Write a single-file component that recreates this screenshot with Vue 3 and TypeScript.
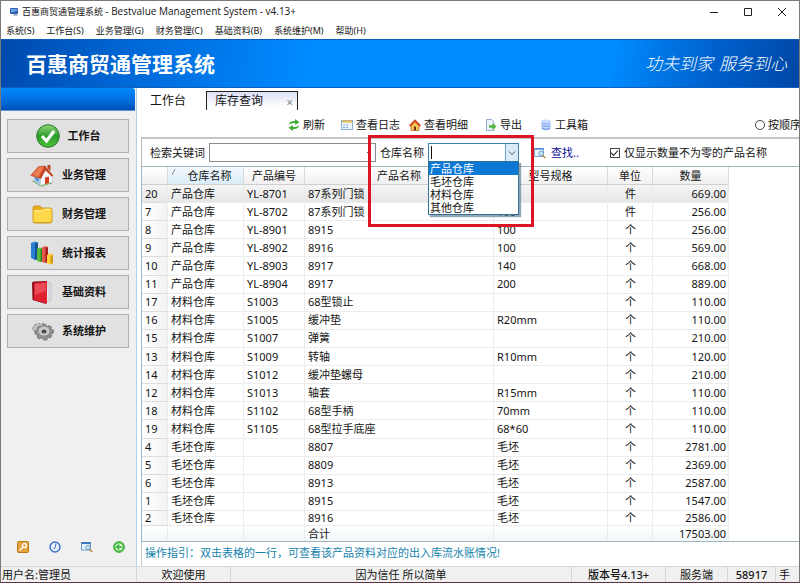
<script setup lang="ts">
import { ref } from 'vue'

interface StockRow {
  no: number
  store: string
  code: string
  name: string
  spec: string
  unit: string
  qty: string
}

const menus: string[] = ['系统(S)', '工作台(S)', '业务管理(G)', '财务管理(C)', '基础资料(B)', '系统维护(M)', '帮助(H)']

const navItems = [
  { id: 'check', label: '工作台' },
  { id: 'house', label: '业务管理' },
  { id: 'folder', label: '财务管理' },
  { id: 'chart', label: '统计报表' },
  { id: 'book', label: '基础资料' },
  { id: 'gear', label: '系统维护' },
]

const stores: string[] = ['产品仓库', '毛坯仓库', '材料仓库', '其他仓库']
const activeStore = ref(0)
const keyword = ref('')
const store = ref('')
const nonZeroOnly = ref(true)

const row = (no: number, store: string, code: string, name: string, spec: string, unit: string, qty: string): StockRow =>
  ({ no, store, code, name, spec, unit, qty })

const rows: StockRow[] = [
  row(20, '产品仓库', 'YL-8701', '87系列门锁', '', '件', '669.00'),
  row(7, '产品仓库', 'YL-8702', '87系列门锁', '100', '件', '256.00'),
  row(8, '产品仓库', 'YL-8901', '8915', '100', '个', '256.00'),
  row(9, '产品仓库', 'YL-8902', '8916', '100', '个', '569.00'),
  row(10, '产品仓库', 'YL-8903', '8917', '140', '个', '668.00'),
  row(11, '产品仓库', 'YL-8904', '8917', '200', '个', '889.00'),
  row(17, '材料仓库', 'S1003', '68型锁止', '', '个', '110.00'),
  row(16, '材料仓库', 'S1005', '缓冲垫', 'R20mm', '个', '110.00'),
  row(15, '材料仓库', 'S1007', '弹簧', '', '个', '210.00'),
  row(13, '材料仓库', 'S1009', '转轴', 'R10mm', '个', '120.00'),
  row(14, '材料仓库', 'S1012', '缓冲垫螺母', '', '个', '210.00'),
  row(12, '材料仓库', 'S1013', '轴套', 'R15mm', '个', '110.00'),
  row(18, '材料仓库', 'S1102', '68型手柄', '70mm', '个', '110.00'),
  row(19, '材料仓库', 'S1105', '68型拉手底座', '68*60', '个', '110.00'),
  row(4, '毛坯仓库', '', '8807', '毛坯', '个', '2781.00'),
  row(5, '毛坯仓库', '', '8809', '毛坯', '个', '2369.00'),
  row(6, '毛坯仓库', '', '8913', '毛坯', '个', '2587.00'),
  row(1, '毛坯仓库', '', '8915', '毛坯', '个', '1547.00'),
  row(2, '毛坯仓库', '', '8916', '毛坯', '个', '2586.00'),
]
</script>

<template>
  <div class="window">
    <header class="titlebar">
      <svg class="app-icon" viewBox="0 0 10 10" width="10" height="10">
        <rect x="1" y="1" width="8" height="6" rx="1" fill="#2f62b5" />
        <path d="M2 2h6v2L2 5.500z" fill="#6fa2e6" />
        <path d="M4 7h4l1 2H5z" fill="#a9b7c9" />
      </svg>
      <h1>百惠商贸通管理系统 <span>- Bestvalue Management System - v4.13+</span></h1>
      <div class="win-buttons">
        <button type="button" aria-label="最小化"><svg viewBox="0 0 10 10" width="10" height="10"><path d="M1 5.500h8" /></svg></button>
        <button type="button" aria-label="最大化"><svg viewBox="0 0 10 10" width="10" height="10"><path d="M1.500 1.500h7v7h-7z" /></svg></button>
        <button type="button" aria-label="关闭"><svg viewBox="0 0 10 10" width="10" height="10"><path d="M1 1l8 8M9 1L1 9" /></svg></button>
      </div>
    </header>

    <nav class="menubar">
      <button v-for="m in menus" :key="m" type="button">{{ m }}</button>
    </nav>

    <div class="banner">
      <strong>百惠商贸通管理系统</strong>
      <p class="slogan"><span>功夫到家</span><span>服务到心</span></p>
    </div>

    <div class="body">
      <aside class="sidebar">
        <div class="side-head"></div>
        <nav class="side-nav">
          <button v-for="item in navItems" :key="item.id" type="button">
            <svg v-if="item.id === 'check'" viewBox="0 0 24 24" width="24" height="24">
              <defs>
                <linearGradient id="gCheck" x1="0" y1="0" x2="0" y2="1">
                  <stop offset="0" stop-color="#8fd67d" /><stop offset=".5" stop-color="#2f9d2b" /><stop offset="1" stop-color="#4fc43c" />
                </linearGradient>
              </defs>
              <circle cx="12" cy="12" r="11.300" fill="url(#gCheck)" stroke="#26772a" />
              <path d="M6 12l4.500 5L18 7" fill="none" stroke="#fff" stroke-width="3.200" />
            </svg>
            <svg v-else-if="item.id === 'house'" viewBox="0 0 24 24" width="24" height="24">
              <path d="M2 18l9 5.500 12-3.500-5-3z" fill="#5da63a" />
              <path d="M4 11l6.500 3v8.500L4 18.500z" fill="#a9c9ea" />
              <path d="M5.500 14l3 1.300v3.200l-3-1.500z" fill="#4a8ad0" />
              <path d="M10.500 14L16 7l6 5.500v6.800l-11.500 3.200z" fill="#f6f9fc" stroke="#b4c4d4" stroke-width=".5" />
              <path d="M15 14.500l4-.900v6.500l-4 1.100z" fill="#d2401e" />
              <path d="M17.500 2h3v6l-3-2.500z" fill="#b9442a" />
              <path d="M.8 12.500L8.500 3.500 15.500 3 10.500 15.500z" fill="#e2633a" stroke="#a83a1b" stroke-width=".5" />
              <path d="M15.200 3l8 9.500-1.200 1.300-6.500-6.300-4.500 8-2-1z" fill="#c4431f" />
              <path d="M3 11.500l6-7 4-.3-5 9.300z" fill="#f08a5e" opacity=".7" />
            </svg>
            <svg v-else-if="item.id === 'folder'" viewBox="0 0 24 24" width="24" height="24">
              <path d="M3 6q0-2 2-2h5l2 2h8q2 0 2 2v11q0 2-2 2H5q-2 0-2-2z" fill="#e9ae1c" stroke="#c48a10" stroke-width=".8" />
              <path d="M3.500 9q0-1 1-1H12l2-1.500h6.500q1 0 1 1v11.500q0 1-1 1h-16q-1 0-1-1z" fill="#ffd84a" />
              <path d="M4.500 9H12.500l2-1.500h6" fill="none" stroke="#fff0a5" stroke-width=".9" />
            </svg>
            <svg v-else-if="item.id === 'chart'" viewBox="0 0 24 24" width="24" height="24">
              <path d="M1 2l4-1.500 3 1V18l-3 1-4-2z" fill="#2b7fd0" /><path d="M5 3l3-1.500V18l-3 1z" fill="#155292" />
              <path d="M7 8l3-1.500 3 1V20l-3 1-3-1z" fill="#5bbd3e" /><path d="M10.500 8.500L13 7.500V20l-2.500 1z" fill="#2f8722" />
              <path d="M12 6.500L15 5l3 1v15l-3 1-3-1z" fill="#e4574c" /><path d="M15.500 7L18 6v15l-2.500 1z" fill="#a71d1d" />
              <path d="M17 14l3-1.500 3 1V22l-3 1.500-3-1z" fill="#ffd23c" /><path d="M20.500 15l2.500-1.500V22l-2.500 1.500z" fill="#d39a10" />
            </svg>
            <svg v-else-if="item.id === 'book'" viewBox="0 0 24 24" width="24" height="24">
              <path d="M17 2l4 1.500V20l-5 2z" fill="#e8e8ee" stroke="#a7a7b4" stroke-width=".6" />
              <path d="M19 3.500V20" stroke="#b5b5c0" stroke-width=".7" />
              <path d="M2 3q0-1.500 2-1.500L17 1v.8L16 3.500V24L2.500 20z" fill="#8d1018" />
              <path d="M4 3l13-1.500V23.500L4 20z" fill="#df2230" />
              <path d="M5 4l11-1.300v8L5 15z" fill="#f0606a" opacity=".65" />
            </svg>
            <svg v-else viewBox="0 0 24 24" width="24" height="24">
              <path d="M2 9l2-1 1-3 2.500.5L9 4l2 1.500L13.500 4l1.500 2.500-1 2 1 2-3 2-5 1-3-1z" fill="#c2c2c2" stroke="#7d7d7d" stroke-width=".6" />
              <path d="M12 8l1-2.500h3L17 8l2-1.500 2.500 1.500-.8 2.400 2.800.6v3l-2.700 1 1.200 2-2 2-2.500-.8L17 21h-3.500l-1-2.500L9.500 20 7 18.500l.8-2.600L5 15v-3l3-.9-1-2.200L9.300 7.200z" fill="#8f8f8f" stroke="#5c5c5c" stroke-width=".6" />
              <ellipse cx="14" cy="12" rx="5.500" ry="4.500" fill="#c9c9c9" />
              <ellipse cx="14" cy="12.500" rx="2.500" ry="2" fill="#4b4b4b" />
            </svg>
            <span>{{ item.label }}</span>
          </button>
        </nav>
        <div class="side-tools">
          <button type="button" aria-label="密码">
            <svg viewBox="0 0 12 12" width="12" height="12">
              <rect x=".5" y=".5" width="11" height="11" rx="1" fill="#e6a23a" stroke="#b87715" />
              <circle cx="7.500" cy="4.500" r="2" fill="none" stroke="#fff" stroke-width="1.300" /><path d="M6 6L2.500 9.500" stroke="#fff" stroke-width="1.500" />
            </svg>
          </button>
          <button type="button" aria-label="时间">
            <svg viewBox="0 0 12 12" width="12" height="12">
              <circle cx="6" cy="6" r="5" fill="#e9f1fd" stroke="#3d6fc9" stroke-width="1.400" /><path d="M7 2.500L6 7 4.500 7.500" fill="none" stroke="#3d6fc9" />
            </svg>
          </button>
          <button type="button" aria-label="查找">
            <svg viewBox="0 0 12 12" width="12" height="12">
              <rect x=".5" y="1.500" width="9" height="7.500" fill="#e5f0fb" stroke="#6d9cd4" /><path d="M.5 2h9" stroke="#3f78c2" stroke-width="2" />
              <circle cx="7" cy="6.500" r="2.300" fill="#bfe0f6" stroke="#6b93ad" stroke-width=".8" /><path d="M8.700 8.500L11.300 11" stroke="#c08a3c" stroke-width="1.500" />
            </svg>
          </button>
          <button type="button" aria-label="返回">
            <svg viewBox="0 0 12 12" width="12" height="12">
              <circle cx="6" cy="6" r="5.400" fill="#4cc443" stroke="#2f9a33" stroke-width=".8" /><circle cx="6" cy="6" r="3.600" fill="#e8fae4" />
              <path d="M9 6H4.500M6.300 3.500L3.800 6l2.500 2.500" fill="none" stroke="#37ad34" stroke-width="1.500" />
            </svg>
          </button>
        </div>
      </aside>

      <main class="content">
        <div class="tabs" role="tablist">
          <button type="button" class="tab" role="tab" aria-selected="false">工作台</button>
          <div class="tab active">
            <button type="button" role="tab" aria-selected="true">库存查询</button>
            <button type="button" class="close" aria-label="关闭标签">×</button>
          </div>
        </div>

        <div class="toolbar">
          <div class="tools">
            <button type="button">
              <svg viewBox="0 0 12 12" width="12" height="12"><g fill="#3faa35"><path d="M1 5.500Q1.500 2 6 2h1V0l4.500 3.200L7 6V4H6Q3.500 4 1 5.500z" /><path d="M11 6.500Q10.500 10 6 10H5v2L.5 8.800 5 6v2h1q2.500 0 5-1.500z" /></g></svg>
              刷新
            </button>
            <button type="button">
              <svg viewBox="0 0 12 12" width="12" height="12"><rect x=".5" y="1.500" width="11" height="9" fill="#edf4fb" stroke="#8eb0d0" /><path d="M1 2.500h10" stroke="#ecbc4f" stroke-width="2" /><path d="M2 6h2M5 6h2M2 8.500h2M5 8.500h2" stroke="#7fa6d6" stroke-width="1.200" /></svg>
              查看日志
            </button>
            <button type="button">
              <svg viewBox="0 0 12 12" width="12" height="12"><path d="M2 6.500L6 2.500l4 4v5H2z" fill="#f7c65a" stroke="#b9702a" stroke-width=".8" /><path d="M.7 7L6 1.500 11.300 7" fill="none" stroke="#cf4a1c" stroke-width="1.900" /><path d="M5 7.500h2v4H5z" fill="#7d2f14" /></svg>
              查看明细
            </button>
            <button type="button">
              <svg viewBox="0 0 12 12" width="12" height="12"><path d="M1.500.5h5l2.500 2.500v8.500H1.500z" fill="#edf3fb" stroke="#93acd0" /><path d="M4 6.200h3.500V4L11.500 7.500 7.500 11V8.800H4z" fill="#4db83f" /></svg>
              导出
            </button>
            <button type="button">
              <svg viewBox="0 0 12 12" width="12" height="12"><path d="M1.500 2.500v7.500Q6 12.500 10.500 10V2.500z" fill="#8aaef0" /><ellipse cx="6" cy="2.500" rx="4.500" ry="1.900" fill="#c7dafd" /><path d="M1.500 5.200q4.500 2.200 9 0M1.500 7.800q4.500 2.200 9 0" fill="none" stroke="#dfeafd" stroke-width=".8" /></svg>
              工具箱
            </button>
          </div>
          <label class="order"><input type="radio" name="order" />按顺序</label>
        </div>

        <form class="search" @submit.prevent>
          <label for="kw">检索关键词</label>
          <div class="combo keyword">
            <input id="kw" v-model="keyword" type="text" />
            <button type="button" aria-label="历史关键词"><svg viewBox="0 0 8 8" width="8" height="8"><path d="M2 3l2 2 2-2" /></svg></button>
          </div>
          <div class="store-field">
            <label for="store">仓库名称</label>
            <div class="combo store">
              <span class="caret"></span>
              <input id="store" v-model="store" type="text" role="combobox" aria-expanded="true" aria-controls="store-list" />
              <button type="button" aria-label="展开"><svg viewBox="0 0 8 8" width="8" height="8"><path d="M1 2.500l3 3 3-3" /></svg></button>
              <ul id="store-list" role="listbox">
                <li v-for="(s, i) in stores" :key="s" role="option" :aria-selected="i === activeStore" :class="{ on: i === activeStore }" @mouseenter="activeStore = i" @click="store = s">{{ s }}</li>
              </ul>
            </div>
            <div class="callout"></div>
          </div>
          <button type="submit" class="find">
            <svg viewBox="0 0 12 12" width="12" height="12">
              <rect x=".5" y="1.500" width="9" height="8" fill="#eaf4fc" stroke="#7fa9d8" /><path d="M.5 2h9" stroke="#4f8ad0" stroke-width="1.500" />
              <circle cx="7" cy="6.500" r="2.300" fill="#c3e6f8" stroke="#6b93ad" stroke-width=".8" /><path d="M8.700 8.500L11.300 11" stroke="#c08a3c" stroke-width="1.500" />
            </svg>
            查找..
          </button>
          <label class="nonzero"><input v-model="nonZeroOnly" type="checkbox" />仅显示数量不为零的产品名称</label>
        </form>

        <div class="grid-wrap">
          <table>
            <thead>
              <tr>
                <th></th>
                <th class="sorted"><svg viewBox="0 0 6 8" width="6" height="8"><path d="M1 7L4 1" /></svg>仓库名称</th>
                <th>产品编号</th>
                <th>产品名称</th>
                <th>型号规格</th>
                <th>单位</th>
                <th>数量</th>
              </tr>
            </thead>
            <tbody>
              <tr v-for="(r, i) in rows" :key="r.no" :class="{ current: i === 0 }">
                <td class="no">{{ r.no }}</td>
                <td>{{ r.store }}</td>
                <td>{{ r.code }}</td>
                <td>{{ r.name }}</td>
                <td>{{ r.spec }}</td>
                <td class="unit">{{ r.unit }}</td>
                <td class="qty">{{ r.qty }}</td>
              </tr>
            </tbody>
            <tfoot>
              <tr>
                <td></td><td></td><td></td>
                <td>合计</td>
                <td></td><td></td>
                <td class="qty">17503.00</td>
              </tr>
            </tfoot>
          </table>
        </div>
        <p class="hint">操作指引：双击表格的一行，可查看该产品资料对应的出入库流水账情况!</p>
      </main>
    </div>

    <footer class="status">
      <span class="user">用户名:管理员</span>
      <span>欢迎使用</span>
      <span>因为信任 所以简单</span>
      <span class="strong">版本号4.13+</span>
      <span>服务端</span>
      <span class="strong">58917</span>
      <span class="last">手</span>
    </footer>
  </div>
</template>

<style>
body {
  margin: 0;
}
</style>

<style scoped>
* {
  box-sizing: border-box;
}
.window {
  display: flex;
  flex-direction: column;
  min-height: 100vh;
  border: 1px solid #7a7a7a;
  border-bottom-color: #5e3340;
  background: #fff;
  color: #141414;
  font: 11px/14px "Noto Sans", "Noto Sans CJK SC", sans-serif;
  white-space: nowrap;
  overflow: hidden;
}
button {
  margin: 0;
  padding: 0;
  border: 0;
  background: none;
  color: inherit;
  font: inherit;
}
input {
  margin: 0;
  font: inherit;
}
svg {
  flex: none;
  display: block;
}

.titlebar {
  display: flex;
  align-items: center;
  gap: 3px;
  height: 21px;
  padding-left: 8px;
}
h1 {
  flex: 1;
  margin: 0;
  font-size: 9px;
  font-weight: 400;
}
h1 span {
  font-family: "Open Sans", sans-serif;
  font-size: 10px;
}
.win-buttons {
  display: flex;
}
.win-buttons button {
  display: flex;
  justify-content: center;
  width: 34px;
}
.win-buttons path {
  fill: none;
  stroke: #222;
}

.menubar {
  display: flex;
  gap: 12px;
  height: 17px;
  padding-left: 5px;
  font-size: 9px;
}

.banner {
  display: flex;
  align-items: center;
  justify-content: space-between;
  height: 49px;
  padding: 0 12px 0 25px;
  border-top: 1px solid #0b5cb8;
  border-bottom: 1px solid #0a5fc2;
  background: linear-gradient(100deg, #0049ad 0%, #0067d6 16%, #008aff 38%, #008cff 76%, #0060cc 89%, #0047a6 100%);
  color: #fff;
}
.banner strong {
  font-size: 21px;
  line-height: 28px;
}
.slogan {
  display: flex;
  gap: 6px;
  margin: 0;
  font-size: 17px;
  font-style: italic;
  font-weight: 300;
  line-height: 24px;
}

.body {
  display: flex;
  flex: 1;
}
.sidebar {
  display: flex;
  flex-direction: column;
  flex: none;
  width: 136px;
  border-right: 1px solid #b5d0ee;
  background: #f0f0f0;
}
.side-head {
  height: 23px;
  margin-right: 1px;
  border-bottom: 1px solid #5b93dc;
  border-top-right-radius: 3px;
  background: linear-gradient(#0089fb, #0070e2 50%, #0051b9);
}
.side-nav {
  display: flex;
  flex-direction: column;
  gap: 5px;
  padding: 8px 7px 0 6px;
}
.side-nav button {
  display: flex;
  align-items: center;
  justify-content: center;
  gap: 8px;
  height: 34px;
  border: 1px solid #b0b0b0;
  background: #e1e1e1;
  font-weight: 700;
}
.side-tools {
  display: flex;
  gap: 20px;
  margin-top: auto;
  padding: 0 0 13px 16px;
}

.content {
  display: flex;
  flex-direction: column;
  flex: 1;
  min-width: 0;
  padding-left: 4px;
}
.tabs {
  display: flex;
  align-items: flex-end;
  gap: 20px;
  height: 22px;
  padding-left: 9px;
  font-size: 12px;
}
.tab {
  height: 19px;
}
.tab.active {
  display: flex;
  justify-content: space-between;
  width: 92px;
  padding: 0 4px 0 8px;
  border: 1px solid #222;
  border-bottom: 0;
  background: linear-gradient(#dcdff5, #fff 80%);
}
.close {
  align-self: flex-end;
  color: #888;
}

.toolbar {
  display: flex;
  align-items: center;
  justify-content: space-between;
  height: 27px;
  padding: 2px 0 0 147px;
}
.tools {
  display: grid;
  grid-template-columns: 53px 68px 76px 55px 60px;
}
.tools button,
.order {
  display: flex;
  align-items: center;
  gap: 3px;
}
.order {
  width: 44px;
}
.order input,
.nonzero input {
  appearance: none;
  flex: none;
  width: 10px;
  height: 10px;
  border: 1px solid #444;
  background: #fff;
}
.order input {
  border-radius: 50%;
}

.search {
  display: flex;
  align-items: center;
  height: 29px;
  padding-left: 8px;
  border-top: 2px solid #c6c6c6;
  border-left: 1px solid #b9b9b9;
}
.combo {
  position: relative;
  display: flex;
  align-items: center;
  height: 19px;
  margin-left: 4px;
  border: 1px solid #8a8a8a;
  background: #fff;
}
.combo input {
  flex: 1;
  width: 0;
  min-width: 0;
  padding: 0 2px;
  border: 0;
  outline: 0;
  background: none;
}
.combo button {
  display: flex;
  align-items: center;
  justify-content: center;
  align-self: stretch;
  width: 13px;
}
.combo path {
  fill: none;
  stroke: #4a5560;
}
.keyword {
  width: 167px;
}
.store-field {
  position: relative;
  display: flex;
  align-items: center;
  margin-left: 4px;
}
.store {
  width: 91px;
  border-color: #3d7fb0;
}
.store button {
  border-left: 1px solid #6ba3cc;
  background: #d9ebf9;
}
.caret {
  width: 1px;
  height: 13px;
  margin-left: 2px;
  background: #111;
}
#store-list {
  position: absolute;
  z-index: 3;
  top: 17px;
  left: -1px;
  right: -1px;
  margin: 0;
  padding: 0;
  border: 1px solid #2f7399;
  background: #fff;
  box-shadow: 2px 2px 1px rgba(80, 110, 130, .6);
  list-style: none;
}
#store-list li {
  padding-left: 1px;
  line-height: 13px;
}
#store-list .on {
  background: #0a78d4;
  color: #fff;
}
.callout {
  position: absolute;
  z-index: 4;
  top: -8px;
  left: -12px;
  right: -15px;
  height: 92px;
  border: 3px solid #dc1424;
  pointer-events: none;
}
.find {
  display: flex;
  align-items: center;
  gap: 5px;
  margin-left: 15px;
  color: #0c0c94;
}
.nonzero {
  display: flex;
  align-items: center;
  gap: 4px;
  margin-left: 31px;
}
.nonzero input {
  display: grid;
  place-items: center;
}
.nonzero input:checked::after {
  content: "";
  width: 6px;
  height: 3px;
  border: solid #222;
  border-width: 0 0 1px 1px;
  transform: translateY(-1px) rotate(-45deg);
}

.grid-wrap {
  display: flex;
  flex: 1;
  border: solid #9fb6bf;
  border-width: 1px 0 1px 1px;
}
table {
  display: flex;
  flex-direction: column;
  width: 587px;
}
tbody {
  display: grid;
  flex: 1;
  grid-template-rows: repeat(18, 1fr) 15px;
}
tr {
  display: grid;
  grid-template-columns: 26px 76px 61px 189px 114px 45px 76px;
}
th {
  height: 18px;
  padding: 0;
  border-right: 1px solid #dadada;
  border-bottom: 1px solid #cfcfcf;
  background: linear-gradient(#fff, #f0f0f1);
  font-weight: 400;
  line-height: 17px;
}
th.sorted {
  position: relative;
  padding-left: 8px;
  background: linear-gradient(#f4fafe, #d9ecf8);
}
th svg {
  position: absolute;
  top: 1px;
  left: 3px;
  fill: none;
  stroke: #8a8a8a;
}
td {
  display: flex;
  align-items: center;
  padding: 0 2px 0 3px;
  border-right: 1px solid #ececec;
  border-bottom: 1px solid #ececec;
}
.no {
  background: linear-gradient(90deg, #fff, #f2f3f4);
  border-bottom-color: #dcdcdc;
}
.current td {
  background: linear-gradient(#f5f5f5, #e6e6e6);
}
.unit {
  justify-content: center;
}
.qty {
  justify-content: flex-end;
}
tfoot td {
  height: 15px;
  border-bottom: 0;
  background: linear-gradient(#fff, #f0f6f8);
}

.hint {
  height: 24px;
  margin: 0;
  padding-left: 3px;
  border-left: 1px solid #c9c9c9;
  color: #1583ad;
  line-height: 22px;
}

.status {
  display: grid;
  grid-template-columns: 136px 94px minmax(0, 1fr) 94px 62px 48px 23px;
  height: 16px;
  border-top: 1px solid #d7d7d7;
  background: #f0f0f0;
  line-height: 15px;
  text-align: center;
}
.status span {
  border-right: 1px solid #d4d4d4;
}
.status .user {
  padding-left: 1px;
  text-align: left;
}
.status .strong {
  font-weight: 500;
}
.status .last {
  border-right: 0;
  padding-left: 3px;
  text-align: left;
}
</style>
